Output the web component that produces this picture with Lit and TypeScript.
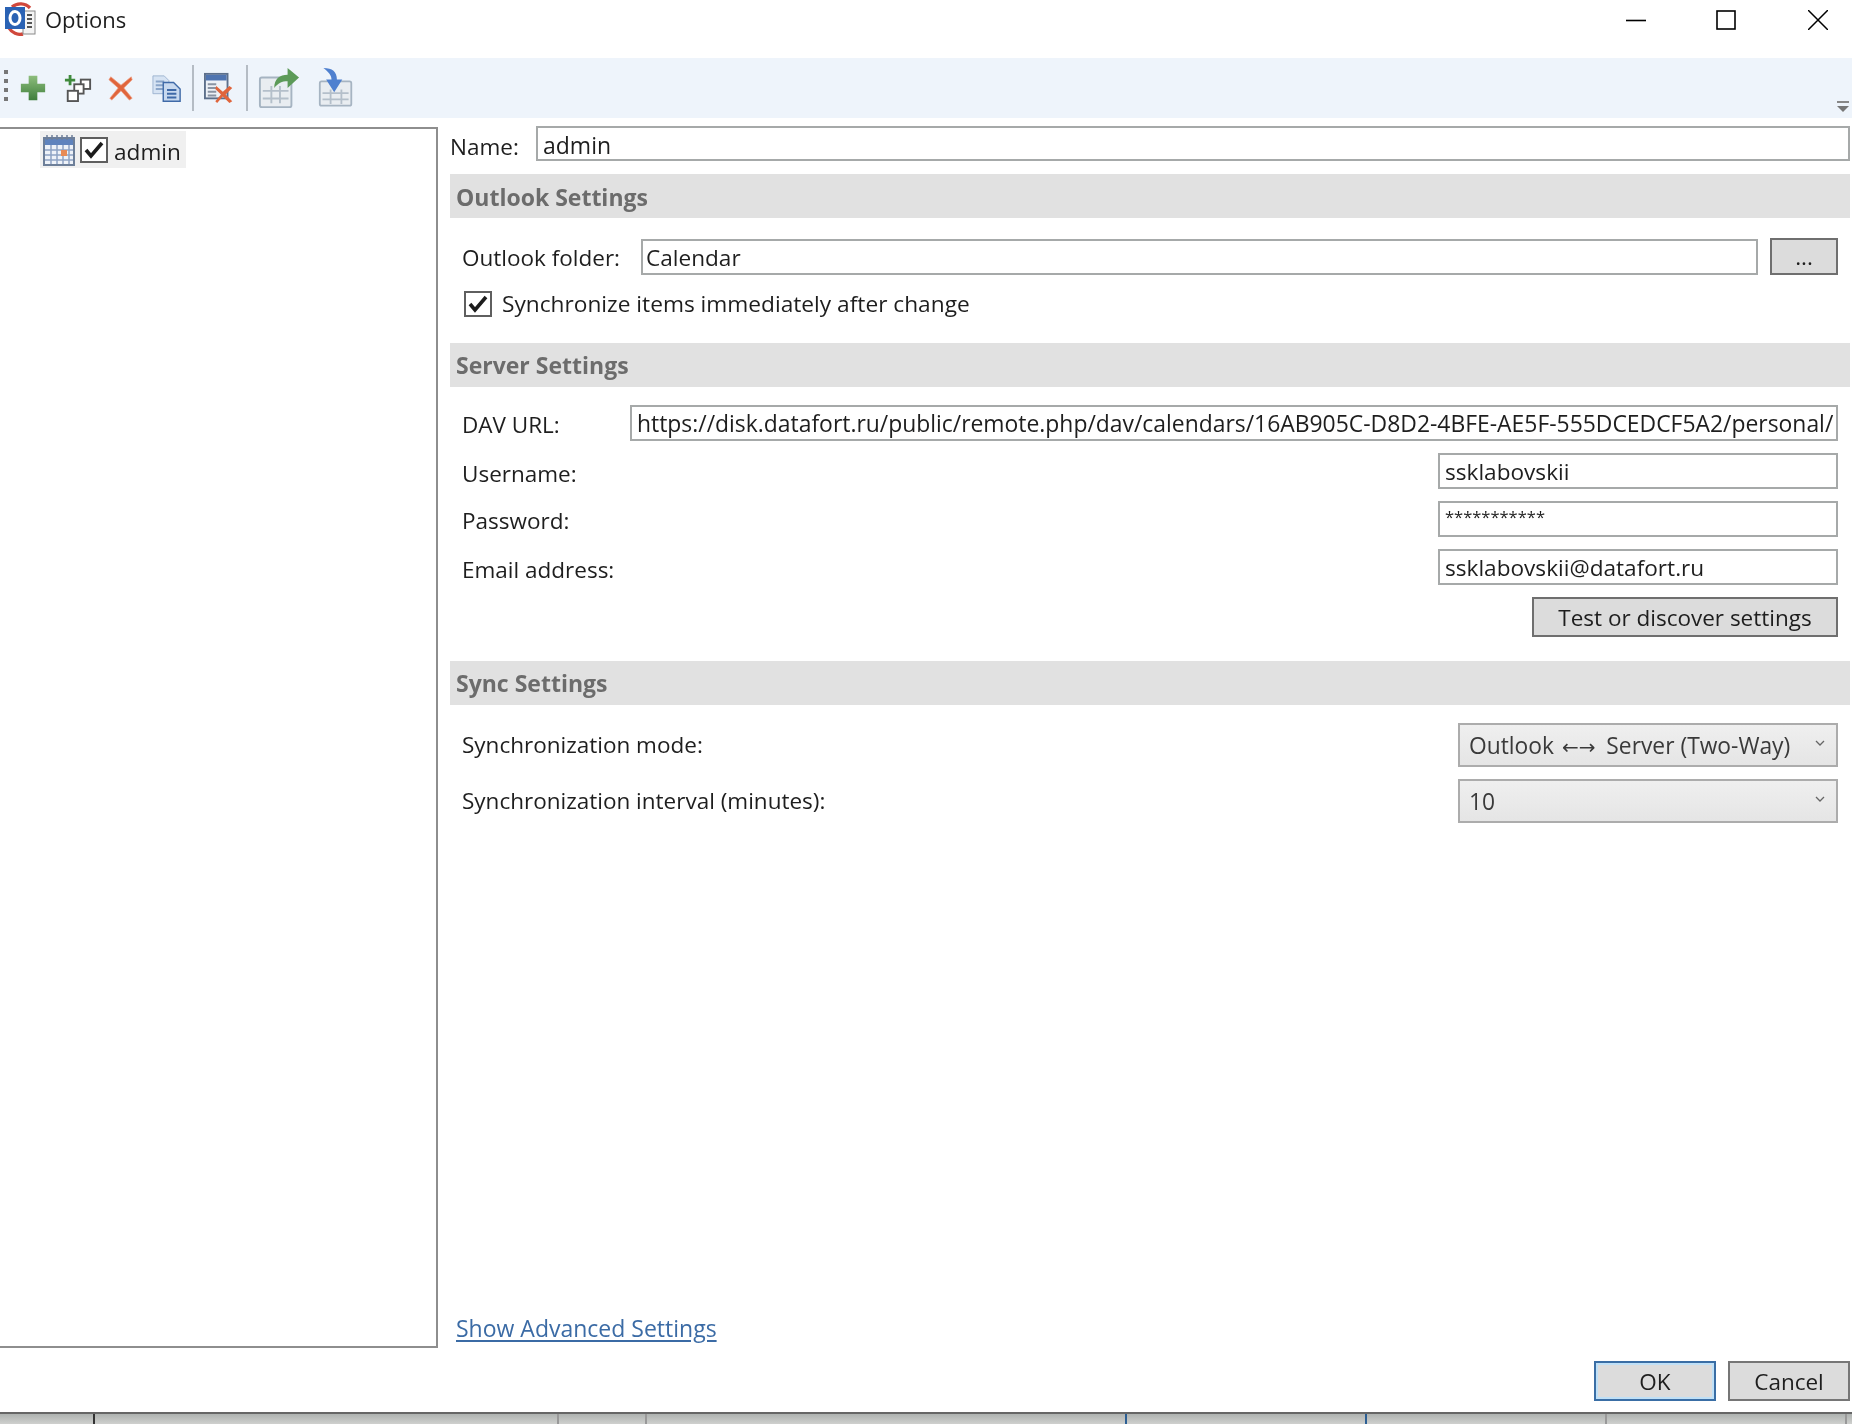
import { LitElement, html, css, svg } from "lit";
import { customElement } from "lit/decorators.js";

const outlookIcon = svg`<svg width="34" height="34" viewBox="0 0 34 34"><path d="M10 5a13 13 0 0 1 18 1M7 26a13 13 0 0 0 14 6" fill="none" stroke="#d0483c" stroke-width="3.4"/><rect x="21" y="9" width="12" height="23" fill="#f4f4f4" stroke="#8a8a8a"/><path d="M25 13h5M25 17h5M25 21h5M25 25h5" stroke="#555" stroke-width="2"/><rect x="3" y="5" width="20" height="22" fill="#2a62b4"/><ellipse cx="13" cy="16" rx="5" ry="6.5" fill="none" stroke="#fff" stroke-width="3"/></svg>`;
const addIcon = svg`<svg viewBox="0 0 30 30"><defs><linearGradient id="g1" x1="0" y1="0" x2="0" y2="1"><stop offset="0" stop-color="#8dbd7c"/><stop offset="1" stop-color="#3f7f3c"/></linearGradient></defs><path d="M10 1h10v9h9v10h-9v9H10v-9H1V10h9z" fill="url(#g1)"/></svg>`;
const addMultiIcon = svg`<svg viewBox="0 0 30 30"><path d="M5 1h3v4h4v3H8v4H5V8H1V5h4z" fill="#3f8a3c"/><g fill="#fff" stroke="#555" stroke-width="2"><rect x="18" y="6" width="10" height="10"/><rect x="11" y="11" width="10" height="10"/><rect x="4" y="18" width="11" height="11"/></g></svg>`;
const deleteIcon = svg`<svg viewBox="0 0 28 28"><path d="M3 2 14 11 25 2l1 3-9 9 9 11-3 2-9-10-10 10-2-2 9-11L1 5z" fill="#e0653c" stroke="#ee9a7c" stroke-width=".8"/></svg>`;
const copyIcon = svg`<svg viewBox="0 0 32 30"><path d="M1 2h12l5 5v14H1z" fill="#d6e3f3" stroke="#9db3d0"/><path d="M4 8h9M4 12h9M4 16h9" stroke="#8aa5c9" stroke-width="2"/><path d="M12 9h11l7 7v13H12z" fill="#c8d9ef" stroke="#3f6aa8" stroke-width="1.5"/><path d="M16 17h10M16 21h10M16 25h10" stroke="#3f6aa8" stroke-width="2"/></svg>`;
const clearIcon = svg`<svg viewBox="0 0 34 34"><rect x="1" y="2" width="24" height="26" fill="#edf1f6" stroke="#5c6f8a" stroke-width="2"/><rect x="2" y="3" width="22" height="6" fill="#4f74b0"/><path d="M4 13h9M4 17h9M4 21h9M4 25h9" stroke="#8a94a3" stroke-width="2"/><path d="M13 15l7 6 7-6 3 2-7 7 7 7-3 2-7-7-6 7-2-2 6-7-6-6z" fill="#e0653c"/></svg>`;
const exportIcon = svg`<svg viewBox="0 0 44 44"><rect x="2" y="11" width="33" height="31" rx="2" fill="#e9edf1" stroke="#a6b4c2" stroke-width="2"/><path d="M5 25h27M5 33h27M14 20v18M23 20v18" stroke="#b4bfca" stroke-width="2"/><path d="M17 22c0-10 6-14 14-14V1l12 10-12 11v-7c-6 0-10 2-14 7z" fill="#5c9a58"/></svg>`;
const importIcon = svg`<svg viewBox="0 0 40 46"><rect x="2" y="16" width="35" height="27" rx="2" fill="#e9edf1" stroke="#a6b4c2" stroke-width="2"/><path d="M5 29h29M5 36h29M14 25v16M26 25v16" stroke="#b4bfca" stroke-width="2"/><path d="M6 1c10 0 15 4 15 13h6l-9 14-9-14h6c0-5-3-8-9-13z" fill="#4f80cf"/></svg>`;
const calIcon = svg`<svg width="32" height="32" viewBox="0 0 32 32"><rect x="1" y="4" width="30" height="27" fill="#eef2f8" stroke="#6d7f99" stroke-width="2"/><rect x="2" y="5" width="28" height="6" fill="#5f83bd"/><path d="M4 1v5M9 1v5M14 1v5M19 1v5M24 1v5M29 1v5" stroke="#6d7f99" stroke-width="1.5"/><path d="M2 16h28M2 21h28M2 26h28M8 11v19M14 11v19M20 11v19M26 11v19" stroke="#8ea3c4" stroke-width="1.5"/><rect x="18" y="16" width="6" height="6" fill="#e88a55"/></svg>`;
const checkMark = svg`<svg width="20" height="18" viewBox="0 0 20 18"><path d="M2 9l5 6L18 2" fill="none" stroke="#1c1c1c" stroke-width="3.6"/></svg>`;
const chevron = svg`<svg width="10" height="6" viewBox="0 0 10 6"><path d="M1 1l4 4 4-4" fill="none" stroke="#666" stroke-width="1.3"/></svg>`;

@customElement("app-root")
export class AppRoot extends LitElement {
  static styles = css`
    :host { display: flex; flex-direction: column; width: 1852px; height: 1424px; background: #fff; overflow: hidden; font-family: "Open Sans", "Noto Sans", sans-serif; font-size: 22.5px; color: #1e1e1e; filter: blur(0.4px); }
    * { box-sizing: border-box; }
    svg { display: block; flex: none; }
    label { white-space: nowrap; padding-top: 3px; }
    .title { height: 58px; display: flex; align-items: flex-start; flex: none; padding: 2px 24px 0 2px; }
    .title-text { margin: 1px 0 0 9px; font-size: 22px; flex: 1; line-height: 32px; }
    .winbtns { display: flex; gap: 70px; padding-top: 8px; }
    .winbtn { width: 20px; height: 20px; }
    .close { margin-left: 2px; }
    .toolbar { height: 60px; flex: none; background: #eef4fb; display: flex; align-items: center; position: relative; padding-left: 4px; }
    .grip { width: 4px; height: 36px; margin-right: 12px; background: repeating-linear-gradient(#777 0 4px, transparent 4px 9px); }
    .tool { display: flex; align-items: center; justify-content: center; height: 46px; }
    .tool svg { width: 100%; height: auto; }
    .t1 { width: 26px; }
    .t2 { width: 28px; margin-left: 18px; }
    .t3 { width: 26px; margin-left: 16px; }
    .t4 { width: 30px; margin-left: 18px; }
    .sep { width: 2px; height: 46px; background: #b5bcc4; margin-left: 10px; }
    .t5 { width: 32px; margin-left: 10px; }
    .t6 { width: 42px; margin-left: 10px; }
    .t7 { width: 36px; margin-left: 18px; }
    .overflow { position: absolute; right: 3px; bottom: 6px; width: 12px; }
    .overflow i { display: block; height: 2px; background: #888; margin-bottom: 3px; }
    .overflow b { display: block; width: 0; border: 6px solid transparent; border-top: 6px solid #777; border-bottom: 0; }
    .main { display: flex; height: 1294px; flex: none; padding-top: 8px; }
    .tree { width: 438px; height: 1221px; margin-top: 1px; flex: none; border-top: 2px solid #8e8e8e; border-right: 2px solid #8e8e8e; border-bottom: 2px solid #8e8e8e; padding: 2px 0 0 40px; }
    .node { display: flex; align-items: center; width: 146px; height: 37px; background: #f0f0f0; padding-left: 3px; }
    .box { width: 28px; height: 26px; border: 2px solid #5f5f5f; background: #fff; display: flex; align-items: center; justify-content: center; flex: none; }
    .node .box { margin-left: 5px; }
    .node span { margin-left: 6px; font-size: 22.6px; padding-top: 3px; }
    .pane { width: 1400px; margin-left: 12px; display: flex; flex-direction: column; }
    .row { display: flex; align-items: center; }
    .field { height: 36px; border: 2px solid #a6a9a9; background: #fff; display: flex; align-items: center; padding: 0 5px; white-space: nowrap; overflow: hidden; font-size: 22.6px; flex: none; }
    .name-row { height: 35px; }
    .name-row label { width: 86px; padding-top: 5px; }
    .name-row .field { width: 1314px; height: 35px; font-size: 23px; padding-top: 2px; }
    .head { height: 44px; background: #e1e1e1; margin-top: 13px; padding-left: 6px; display: flex; align-items: center; font-weight: 700; color: #6c6c6c; font-size: 23px; flex: none; }
    .head-first { padding-top: 2px; }
    .head-server { margin-top: 26px; }
    .head-sync { margin-top: 24px; }
    .body { padding: 20px 0 0 12px; display: flex; flex-direction: column; width: 1388px; }
    .body-tight { padding-top: 18px; }
    .folder-label { padding-top: 1px; }
    .folder { width: 1117px; margin-left: auto; padding: 2px 3px 0; }
    .dots { width: 68px; height: 37px; margin-left: 12px; }
    .sync { margin-top: 16px; padding-left: 2px; height: 26px; font-size: 22.7px; line-height: 24px; }
    .sync .box { margin-right: 10px; }
    .url { margin-left: auto; width: 1208px; font-size: 22.9px; }
    .between { justify-content: space-between; }
    .w400 { width: 400px; }
    .mt12 { margin-top: 12px; }
    .low { padding-top: 4px; }
    .flat { padding: 0 0 2px; }
    .pw { align-items: flex-start; font-size: 16.5px; line-height: 22px; padding-top: 3px; }
    button { font: inherit; color: inherit; background: #dcdcdc; border: 2px solid #6f6f6f; padding: 0; }
    .test { width: 306px; height: 40px; align-self: flex-end; margin-top: 12px; }
    .select { height: 44px; width: 380px; border: 2px solid #acacac; background: linear-gradient(#efefef, #e5e5e5); display: flex; align-items: center; justify-content: space-between; padding: 0 11px 0 9px; color: #3a3a3a; font-size: 22.8px; }
    .select svg { margin-bottom: 4px; }
    .arrows { font-family: "DejaVu Sans", sans-serif; font-size: 20px; line-height: 1; margin: 0 5px 0 2px; }
    .link { color: #3b6ba5; text-decoration: underline; text-underline-offset: 3px; margin: auto 0 13px 6px; height: 32px; line-height: 32px; font-size: 23px; }
    .actions { height: 55px; flex: none; display: flex; justify-content: flex-end; align-items: flex-start; gap: 12px; padding-top: 4px; }
    .ok { width: 122px; height: 40px; border: 2px solid #3a6ea5; box-shadow: inset 0 0 0 2px #bfe0f7; background: #dcdcdc; }
    .cancel { width: 122px; height: 40px; border-color: #767676; }
    .taskbar { height: 12px; flex: none; border-top: 2px solid #666; background: linear-gradient(#aeb2b0, #cfd0ce); display: flex; position: relative; }
    .tick { width: 2px; height: 10px; background: #999; }
    .dark { background: #333; margin-left: 93px; }
    .t-a { margin-left: 462px; }
    .t-b { margin-left: 86px; }
    .blue { background: #2c5f94; }
    .t-c { margin-left: 478px; }
    .t-d { margin-left: 238px; }
    .t-e { margin-left: 238px; }
    .t-f { margin-left: 238px; }
  `;

  render() {
    return html`
      <div class="title">
        ${outlookIcon}
        <div class="title-text">Options</div>
        <div class="winbtns">
          <svg class="winbtn" viewBox="0 0 20 20"><path d="M0 10.5h20" stroke="#000" stroke-width="1.6"/></svg>
          <svg class="winbtn" viewBox="0 0 20 20"><rect x="1" y="1" width="18" height="18" fill="none" stroke="#000" stroke-width="1.6"/></svg>
          <svg class="winbtn close" viewBox="0 0 20 20"><path d="M0 0l20 20M20 0L0 20" stroke="#000" stroke-width="1.5"/></svg>
        </div>
      </div>
      <div class="toolbar">
        <div class="grip"></div>
        <div class="tool t1">${addIcon}</div>
        <div class="tool t2">${addMultiIcon}</div>
        <div class="tool t3">${deleteIcon}</div>
        <div class="tool t4">${copyIcon}</div>
        <div class="sep"></div>
        <div class="tool t5">${clearIcon}</div>
        <div class="sep"></div>
        <div class="tool t6">${exportIcon}</div>
        <div class="tool t7">${importIcon}</div>
        <div class="overflow"><i></i><b></b></div>
      </div>
      <div class="main">
        <div class="tree">
          <div class="node">${calIcon}<div class="box">${checkMark}</div><span>admin</span></div>
        </div>
        <div class="pane">
          <div class="row name-row"><label>Name:</label><div class="field">admin</div></div>
          <div class="head head-first">Outlook Settings</div>
          <div class="body">
            <div class="row"><label class="folder-label">Outlook folder:</label><div class="field folder">Calendar</div><button class="dots">...</button></div>
            <div class="row sync"><div class="box">${checkMark}</div><span>Synchronize items immediately after change</span></div>
          </div>
          <div class="head head-server">Server Settings</div>
          <div class="body body-tight">
            <div class="row"><label>DAV URL:</label><div class="field url">https://disk.datafort.ru/public/remote.php/dav/calendars/16AB905C-D8D2-4BFE-AE5F-555DCEDCF5A2/personal/</div></div>
            <div class="row between mt12"><label class="low">Username:</label><div class="field w400">ssklabovskii</div></div>
            <div class="row between mt12"><label>Password:</label><div class="field w400 pw">***********</div></div>
            <div class="row between mt12"><label class="low">Email address:</label><div class="field w400">ssklabovskii@datafort.ru</div></div>
            <button class="test">Test or discover settings</button>
          </div>
          <div class="head head-sync">Sync Settings</div>
          <div class="body body-tight">
            <div class="row between"><label class="flat">Synchronization mode:</label><div class="select"><span>Outlook <span class="arrows">←→</span> Server (Two-Way)</span>${chevron}</div></div>
            <div class="row between mt12"><label class="flat">Synchronization interval (minutes):</label><div class="select"><span>10</span>${chevron}</div></div>
          </div>
          <a class="link">Show Advanced Settings</a>
          <div class="actions"><button class="ok">OK</button><button class="cancel">Cancel</button></div>
        </div>
      </div>
      <div class="taskbar">
        <div class="tick dark"></div>
        <div class="tick t-a"></div>
        <div class="tick t-b"></div>
        <div class="tick blue t-c"></div>
        <div class="tick blue t-d"></div>
        <div class="tick t-e"></div>
        <div class="tick t-f"></div>
      </div>
    `;
  }
}
